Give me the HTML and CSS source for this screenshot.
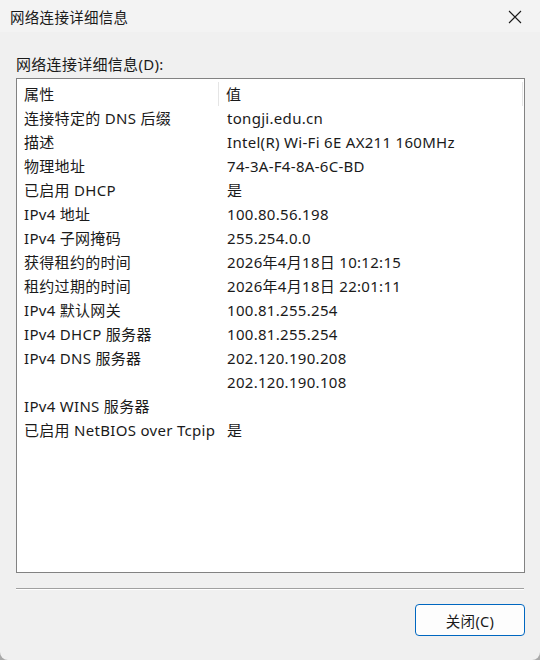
FILE: index.html
```html
<!DOCTYPE html>
<html lang="zh-CN">
<head>
    <meta charset="UTF-8">
    <meta name="viewport" content="width=device-width, initial-scale=1.0">
    <title>网络连接详细信息</title>
    <link rel="stylesheet" href="styles.css">
</head>
<body>
    <div class="window">
        <div class="titlebar">
            <span class="title">网络连接详细信息</span>
            <button class="close-x" title="关闭">
                <svg width="14" height="14" viewBox="0 0 14 14">
                    <path d="M1 1 L13 13 M13 1 L1 13" stroke="#1a1a1a" stroke-width="1.1" fill="none"/>
                </svg>
            </button>
        </div>

        <div class="content">
            <div class="label">网络连接详细信息(D):</div>

            <div class="listbox">
                <div class="row head">
                    <div class="col1">属性</div>
                    <div class="col2">值</div>
                    <div class="head-end"></div>
                </div>
                <div class="row"><div class="col1">连接特定的 DNS 后缀</div><div class="col2">tongji.edu.cn</div></div>
                <div class="row"><div class="col1">描述</div><div class="col2">Intel(R) Wi-Fi 6E AX211 160MHz</div></div>
                <div class="row"><div class="col1">物理地址</div><div class="col2">74-3A-F4-8A-6C-BD</div></div>
                <div class="row"><div class="col1">已启用 DHCP</div><div class="col2">是</div></div>
                <div class="row"><div class="col1">IPv4 地址</div><div class="col2">100.80.56.198</div></div>
                <div class="row"><div class="col1">IPv4 子网掩码</div><div class="col2">255.254.0.0</div></div>
                <div class="row"><div class="col1">获得租约的时间</div><div class="col2">2026年4月18日 10:12:15</div></div>
                <div class="row"><div class="col1">租约过期的时间</div><div class="col2">2026年4月18日 22:01:11</div></div>
                <div class="row"><div class="col1">IPv4 默认网关</div><div class="col2">100.81.255.254</div></div>
                <div class="row"><div class="col1">IPv4 DHCP 服务器</div><div class="col2">100.81.255.254</div></div>
                <div class="row"><div class="col1">IPv4 DNS 服务器</div><div class="col2">202.120.190.208</div></div>
                <div class="row"><div class="col1"></div><div class="col2">202.120.190.108</div></div>
                <div class="row"><div class="col1">IPv4 WINS 服务器</div><div class="col2"></div></div>
                <div class="row"><div class="col1">已启用 NetBIOS over Tcpip</div><div class="col2">是</div></div>
            </div>

            <div class="sep"></div>

            <div class="actions">
                <button class="btn">关闭(C)</button>
            </div>
        </div>
    </div>
</body>
</html>
```

FILE: styles.css
```css
* {
  box-sizing: border-box;
}
body {
  margin: 0;
  background: #a9a9a9;
  font-family: "Noto Sans", "Noto Sans CJK SC", sans-serif;
  font-size: 15px;
  letter-spacing: 0.3px;
  color: #1a1a1a;
}

.window {
  width: 540px;
  height: 660px;
  background: #f0f0f0;
  border-radius: 0 0 8px 8px;
  overflow: hidden;
}

/* Title bar */
.titlebar {
  height: 32px;
  background: #f3f3f3;
  display: flex;
  align-items: center;
  justify-content: space-between;
  padding-left: 10px;
}
.title {
  font-size: 14.5px;
  color: #1a1a1a;
}
.close-x {
  border: 0;
  background: transparent;
  width: 46px;
  height: 32px;
  padding: 0;
  display: flex;
  align-items: center;
  justify-content: center;
}
.close-x svg {
  margin-left: -4px;
  margin-top: 1px;
}

/* Body */
.content {
  padding: 22px 15px 0 16px;
}
.label {
  height: 20px;
  line-height: 20px;
  margin-bottom: 4px;
}

.listbox {
  height: 495px;
  background: white;
  border: 1px solid #828282;
  padding-top: 3px;
}
.row {
  display: flex;
  height: 24px;
  line-height: 24px;
  white-space: nowrap;
}
.col1 {
  width: 202px;
  padding-left: 7px;
  flex: none;
  overflow: visible;
}
.col2 {
  padding-left: 8px;
  flex: 1;
}
.head .col1 {
  border-right: 1px solid #e5e5e5;
}
.head .col2 {
  padding-left: 7px;
}
.head-end {
  width: 1px;
  margin-right: 1px;
  background: #e5e5e5;
}

.sep {
  margin-top: 15px;
  margin-right: 1px;
  height: 2px;
  border-top: 1px solid #a0a0a0;
  border-bottom: 1px solid #ffffff;
}

.actions {
  display: flex;
  justify-content: flex-end;
  margin-top: 14px;
}
.btn {
  width: 110px;
  height: 32px;
  font-family: "Noto Sans", "Noto Sans CJK SC", sans-serif;
  font-size: 14.5px;
  letter-spacing: 0.3px;
  color: #1a1a1a;
  background: #fdfdfd;
  border: 1px solid #0067c0;
  border-radius: 4px;
  padding: 0;
}
```
